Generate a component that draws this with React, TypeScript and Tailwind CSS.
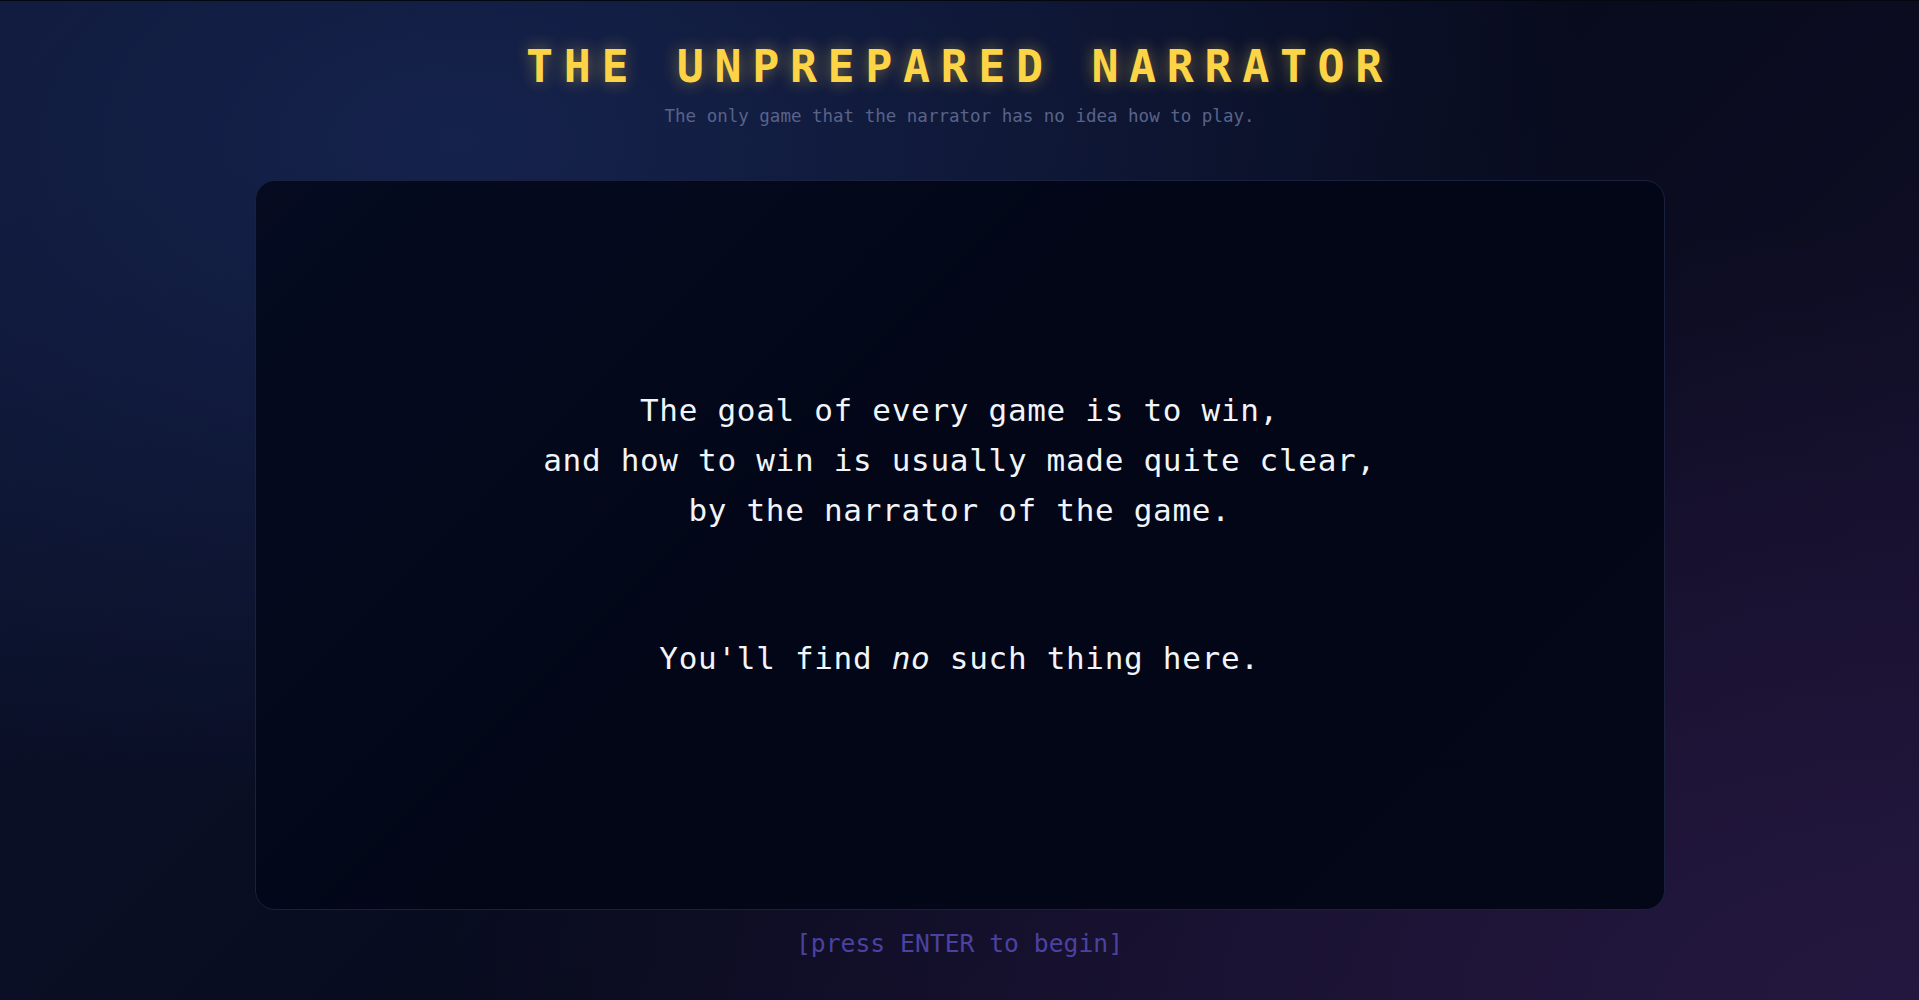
/**
 * Title Screen
 * ============
 * Intro card shown before the game starts.
 */

const mono = "font-['DejaVu_Sans_Mono','Liberation_Mono',monospace]"

const introLines = [
  'The goal of every game is to win,',
  'and how to win is usually made quite clear,',
  'by the narrator of the game.',
]

export default function App() {
  return (
    <div
      className={`${mono} min-h-screen h-[1000px] overflow-hidden border-t border-[#05070f] flex flex-col items-center bg-[#090d20] bg-[radial-gradient(ellipse_at_24%_14%,#15224c_0%,rgba(21,34,76,0)_55%),radial-gradient(ellipse_at_100%_100%,#24173f_0%,rgba(36,23,63,0)_55%),linear-gradient(135deg,#0c1430_0%,#080b1d_55%,#150f2b_100%)]`}
    >
      {/* Header */}
      <h1 className="pt-[43px] text-[45px] leading-none font-bold tracking-[10.6px] text-[#fdd446] [text-shadow:0_0_16px_rgba(253,212,70,0.45)]">
        THE UNPREPARED NARRATOR
      </h1>
      <p className="mt-[14px] text-[17.5px] leading-[26px] text-[#59638a]">
        The only game that the narrator has no idea how to play.
      </p>

      {/* Intro card */}
      <div className="mt-[51px] w-[1410px] h-[730px] rounded-[20px] border border-[#19213f] bg-[linear-gradient(135deg,#050b20_0%,#020617_45%,#030718_100%)] flex flex-col items-center justify-center pb-[23px]">
        <div className="text-center text-[31px] leading-[50px] tracking-[0.7px] text-[#f1f5f9]">
          {introLines.map(line => (
            <div key={line}>{line}</div>
          ))}
          <div className="mt-[98px]">
            You'll find <em className="italic">no</em> such thing here.
          </div>
        </div>
      </div>

      {/* Footer prompt */}
      <div className="mt-[17px] text-[24.7px] leading-[34px] text-[#4a42a0]">
        [press ENTER to begin]
      </div>
    </div>
  )
}
